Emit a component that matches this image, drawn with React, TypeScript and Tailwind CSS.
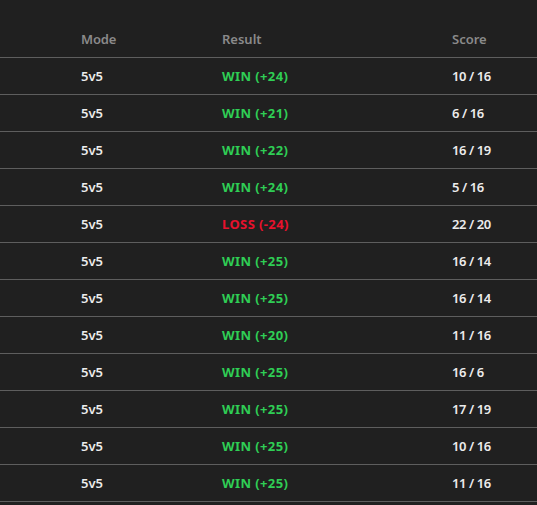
import React from 'react';

type Match = { mode: string; win: boolean; delta: number; score: string };

const matches: Match[] = [
  { mode: '5v5', win: true, delta: 24, score: '10 / 16' },
  { mode: '5v5', win: true, delta: 21, score: '6 / 16' },
  { mode: '5v5', win: true, delta: 22, score: '16 / 19' },
  { mode: '5v5', win: true, delta: 24, score: '5 / 16' },
  { mode: '5v5', win: false, delta: -24, score: '22 / 20' },
  { mode: '5v5', win: true, delta: 25, score: '16 / 14' },
  { mode: '5v5', win: true, delta: 25, score: '16 / 14' },
  { mode: '5v5', win: true, delta: 20, score: '11 / 16' },
  { mode: '5v5', win: true, delta: 25, score: '16 / 6' },
  { mode: '5v5', win: true, delta: 25, score: '17 / 19' },
  { mode: '5v5', win: true, delta: 25, score: '10 / 16' },
  { mode: '5v5', win: true, delta: 25, score: '11 / 16' },
];

const App = () => {
  return (
    <div className="min-h-screen bg-[#202020] font-['Noto_Sans',sans-serif] text-[13px] font-semibold">
      {/* Header */}
      <div className="flex h-[57px] items-end pb-[8px] pl-[81px] text-[#8a8a8a]">
        <div className="w-[141px] tracking-[-0.2px]">Mode</div>
        <div className="w-[230px]">Result</div>
        <div>Score</div>
      </div>

      {/* Rows */}
      {matches.map((m, i) => (
        <div key={i} className="flex h-[37px] items-center border-t border-[#5e5e5e] pl-[81px] pt-[2px] text-[#ececec]">
          <div className="w-[141px]">{m.mode}</div>
          <div className={`w-[230px] font-bold tracking-[0.4px] ${m.win ? 'text-[#2fce55]' : 'text-[#e8112d]'}`}>
            {m.win ? `WIN (+${m.delta})` : `LOSS (${m.delta})`}
          </div>
          <div className="tracking-[-0.4px]">{m.score}</div>
        </div>
      ))}
      <div className="border-t border-[#5e5e5e]" />
    </div>
  );
};

export default App;
